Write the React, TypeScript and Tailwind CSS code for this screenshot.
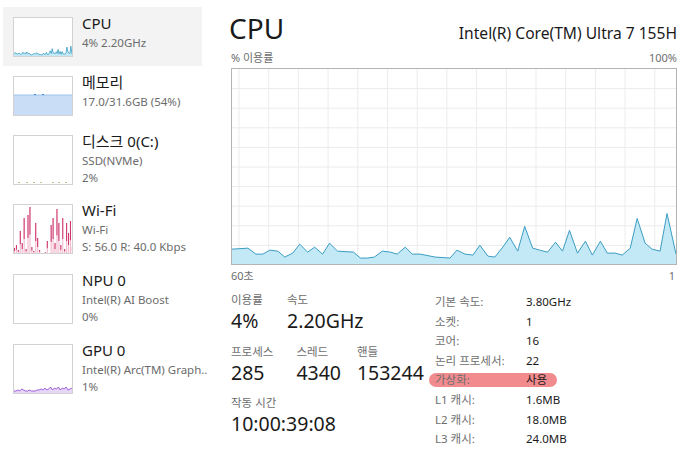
import React from "react";
import clsx from "clsx";

// 메인 CPU 그래프 데이터 (x: 0~446, h: 0~197)
const cpuPts: [number, number][] = [
  [0, 15], [16, 16], [24, 10], [31, 10], [38, 14], [46, 13], [53, 7], [61, 11], [68, 20], [76, 12],
  [83, 17], [91, 10], [98, 21], [106, 13], [122, 12], [129, 6], [136, 6], [143, 7], [151, 13], [159, 12],
  [166, 10], [174, 17], [181, 10], [189, 10], [204, 7], [219, 6], [226, 14], [234, 10], [242, 9], [249, 19],
  [257, 8], [264, 7], [272, 17], [279, 27], [287, 13], [294, 38], [302, 16], [309, 14], [317, 12], [325, 22],
  [332, 13], [339, 34], [347, 11], [355, 23], [362, 9], [370, 23], [377, 11], [385, 11], [392, 9], [400, 16],
  [407, 46], [415, 21], [422, 15], [430, 13], [437, 51], [446, 10],
];

const wifiH = [5, 8, 3, 22, 10, 35, 4, 38, 46, 6, 2, 30, 15, 3, 0, 0, 1, 12, 0, 28, 35, 10, 44, 30, 8, 35, 4, 30, 20, 32, 6];
const gpuH = [1, 1, 2, 1, 3, 2, 1, 1, 2, 1, 1, 1, 2, 2, 3, 2, 4, 2, 3, 5, 2, 4, 3, 5, 2, 4, 3, 5, 2, 3, 4];

function CpuGraph({ w, h, strokeW = 1 }: { w: number; h: number; strokeW?: number }) {
  const sx = w / 446;
  const sy = h / 197;
  const line = cpuPts.map(([x, v]) => `${(x * sx).toFixed(2)},${(h - v * sy).toFixed(2)}`).join(" ");
  return (
    <svg width={w} height={h} className="block">
      <polygon points={`0,${h} ${line} ${w},${h}`} fill="#c4e9f6" />
      <polyline points={line} fill="none" stroke="#3b9cc3" strokeWidth={strokeW} />
    </svg>
  );
}

function MainGraph() {
  const W = 444;
  const H = 195;
  const vx: number[] = [];
  for (let x = 7; x < W; x += 29.7) vx.push(x);
  const hy: number[] = [];
  for (let i = 1; i < 10; i++) hy.push(i * 19.6);
  return (
    <div className="w-[446px] h-[197px] border border-[#b4b4b4] relative">
      <svg width={W} height={H} className="absolute left-0 top-0">
        {vx.map((x) => (
          <line key={"v" + x} x1={x} y1={0} x2={x} y2={H} stroke="#ececec" strokeWidth={1} />
        ))}
        {hy.map((y) => (
          <line key={"h" + y} x1={0} y1={y} x2={W} y2={y} stroke="#ececec" strokeWidth={1} />
        ))}
      </svg>
      <div className="absolute left-0 top-0">
        <CpuGraph w={W} h={H} />
      </div>
    </div>
  );
}

function MemThumb() {
  return (
    <svg width={58} height={38} className="block">
      <rect x={0} y={18} width={58} height={20} fill="#c9def6" />
      <line x1={0} y1={18} x2={58} y2={18} stroke="#9cc2ea" strokeWidth={1} />
      <rect x={20} y={17} width={2} height={1} fill="#3d86d6" />
      <rect x={28} y={17} width={2} height={1} fill="#3d86d6" />
    </svg>
  );
}

function DiskThumb() {
  return (
    <svg width={58} height={48} className="block">
      {[4, 12, 19, 26, 38, 44, 51].map((x) => (
        <rect key={x} x={x} y={46} width={2} height={1} fill="#b5c78c" />
      ))}
    </svg>
  );
}

function WifiThumb() {
  return (
    <svg width={58} height={48} className="block">
      {wifiH.map((v, i) =>
        v > 0 ? (
          <g key={i}>
            <line x1={i * 1.93 + 0.5} y1={48 - v} x2={i * 1.93 + 0.5} y2={48} stroke="#f2bfd2" strokeWidth={1.2} />
            <line x1={i * 1.93 + 0.5} y1={48 - v} x2={i * 1.93 + 0.5} y2={48 - v * 0.4} stroke="#c8215f" strokeWidth={0.9} />
          </g>
        ) : null
      )}
    </svg>
  );
}

function GpuThumb() {
  const pts = gpuH.map((v, i) => `${i * 1.93},${47 - v}`).join(" ");
  return (
    <svg width={58} height={48} className="block">
      <polygon points={`0,48 ${pts} 58,48`} fill="#e6d6f7" />
      <polyline points={pts} fill="none" stroke="#8a3fd1" strokeWidth={0.8} />
    </svg>
  );
}

function SideItem({
  selected,
  className,
  thumbClass,
  thumb,
  title,
  lines,
}: {
  selected?: boolean;
  className: string;
  thumbClass: string;
  thumb: React.ReactNode;
  title: string;
  lines: string[];
}) {
  return (
    <div className={clsx("flex pl-[10px] pt-[10px]", className, selected && "bg-[#f3f3f3]")}>
      <div className={clsx("w-[60px] shrink-0 border border-[#d2d2d2] bg-white overflow-hidden", thumbClass)}>{thumb}</div>
      <div className="ml-[9px] mt-[-4px] min-w-0">
        <div className="text-[15px] leading-[21px] text-[#1a1a1a]">{title}</div>
        {lines.map((l) => (
          <div key={l} className="text-[11.5px] leading-[17px] text-[#6b6b6b] whitespace-nowrap">
            {l}
          </div>
        ))}
      </div>
    </div>
  );
}

const specs: [string, string][] = [
  ["기본 속도:", "3.80GHz"],
  ["소켓:", "1"],
  ["코어:", "16"],
  ["논리 프로세서:", "22"],
  ["가상화:", "사용"],
  ["L1 캐시:", "1.6MB"],
  ["L2 캐시:", "18.0MB"],
  ["L3 캐시:", "24.0MB"],
];

function Stat({ label, value, className }: { label: string; value: string; className: string }) {
  return (
    <div className={className}>
      <div className="text-[11.5px] leading-[16px] text-[#6e6e6e]">{label}</div>
      <div className="text-[19.5px] leading-[26px] text-[#1a1a1a]">{value}</div>
    </div>
  );
}

export default function App() {
  return (
    <div className="w-[700px] h-[467px] bg-white flex font-['Noto_Sans','Noto_Sans_CJK_KR',sans-serif] overflow-hidden">
      {/* 사이드바 */}
      <div className="w-[205px] shrink-0 pl-[3px] pr-[3px] pt-[7px]">
        <SideItem
          selected
          className="h-[59px]"
          thumbClass="h-[40px]"
          thumb={<CpuGraph w={58} h={38} strokeW={0.8} />}
          title="CPU"
          lines={["4%  2.20GHz"]}
        />
        <SideItem className="h-[59px]" thumbClass="h-[40px]" thumb={<MemThumb />} title="메모리" lines={["17.0/31.6GB (54%)"]} />
        <SideItem className="h-[69px]" thumbClass="h-[50px]" thumb={<DiskThumb />} title="디스크 0(C:)" lines={["SSD(NVMe)", "2%"]} />
        <SideItem className="h-[70px]" thumbClass="h-[50px]" thumb={<WifiThumb />} title="Wi-Fi" lines={["Wi-Fi", "S: 56.0  R: 40.0 Kbps"]} />
        <SideItem className="h-[70px]" thumbClass="h-[50px]" thumb={null} title="NPU 0" lines={["Intel(R) AI Boost", "0%"]} />
        <SideItem className="h-[70px]" thumbClass="h-[50px]" thumb={<GpuThumb />} title="GPU 0" lines={["Intel(R) Arc(TM) Graph..", "1%"]} />
      </div>

      {/* 메인 */}
      <div className="ml-[26px] w-[446px] shrink-0 pt-[11px]">
        <div className="flex items-baseline justify-between">
          <div className="text-[28px] leading-[35px] text-[#1a1a1a] ml-[-2px]">CPU</div>
          <div className="text-[15.6px] leading-[20px] text-[#1a1a1a]">Intel(R) Core(TM) Ultra 7 155H</div>
        </div>
        <div className="flex justify-between mt-[5px] text-[11px] leading-[14px] text-[#6e6e6e]">
          <span>% 이용률</span>
          <span>100%</span>
        </div>
        <div className="mt-[3px]">
          <MainGraph />
        </div>
        <div className="flex justify-between mt-[4px] text-[11px] leading-[14px] text-[#6e6e6e]">
          <span>60초</span>
          <span className="mr-[2px]">1</span>
        </div>

        <div className="flex mt-[9px]">
          <div className="w-[204px] shrink-0">
            <div className="flex">
              <Stat className="w-[56px]" label="이용률" value="4%" />
              <Stat className="w-[100px]" label="속도" value="2.20GHz" />
            </div>
            <div className="flex mt-[10px]">
              <Stat className="w-[67px]" label="프로세스" value="285" />
              <Stat className="w-[62px]" label="스레드" value="4340" />
              <Stat className="w-[80px]" label="핸들" value="153244" />
            </div>
            <div className="mt-[9px]">
              <Stat className="" label="작동 시간" value="10:00:39:08" />
            </div>
          </div>
          <div>
            {specs.map(([k, v]) => (
              <div key={k} className="relative flex text-[11.5px] leading-[19.6px]">
                {k === "가상화:" && (
                  <span className="absolute left-[-6px] top-[3px] w-[128px] h-[14px] rounded-full bg-[#f28b8e]" />
                )}
                <span className="relative w-[91px] text-[#6e6e6e]">{k}</span>
                <span className="relative text-[#1a1a1a]">{v}</span>
              </div>
            ))}
          </div>
        </div>
      </div>
    </div>
  );
}
